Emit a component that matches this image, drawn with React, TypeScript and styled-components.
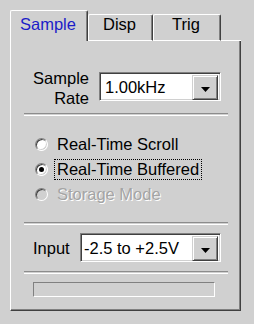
import styled, { createGlobalStyle } from 'styled-components';

const GlobalStyle = createGlobalStyle`
  html, body {
    margin: 0;
    padding: 0;
    background: #d0d0d0;
  }
  body {
    font-family: 'Liberation Sans', Arial, sans-serif;
    font-size: 16.5px;
    color: #000;
  }
`;

const Window = styled.div`
  width: 254px;
  height: 324px;
  padding: 10px 0 0 10px;
  box-sizing: border-box;
  background: #d0d0d0;
`;

const TabControl = styled.div`
  width: 231px;
  display: flex;
  flex-direction: column;
`;

const TabStrip = styled.div`
  display: flex;
  align-items: flex-end;
  height: 31px;
`;

const Tab = styled.div<{ $active?: boolean; $width: number }>`
  box-sizing: border-box;
  width: ${({ $width }) => $width}px;
  height: ${({ $active }) => ($active ? 31 : 27)}px;
  padding-top: ${({ $active }) => ($active ? 4 : 0)}px;
  padding-right: 2px;
  display: flex;
  justify-content: center;
  align-items: flex-start;
  line-height: 18px;
  border-top: 1px solid #fff;
  border-left: 1px solid #fff;
  border-right: 1px solid #404040;
  border-bottom: ${({ $active }) => ($active ? 'none' : '1px solid #fff')};
  border-radius: 2px 2px 0 0;
  box-shadow: inset -1px 0 #808080;
  color: ${({ $active }) => ($active ? '#1c1cc8' : '#000')};
`;

const TabFill = styled.div`
  flex: 1;
  border-bottom: 1px solid #fff;
`;

const Panel = styled.div`
  box-sizing: border-box;
  height: 270px;
  padding: 27px 12px 0 13px;
  border-left: 1px solid #fff;
  border-right: 1px solid #404040;
  border-bottom: 1px solid #404040;
  box-shadow: inset -1px -1px #808080;
  display: flex;
  flex-direction: column;
`;

const FieldRow = styled.div<{ $indent?: number; $align?: string; $top?: number }>`
  display: flex;
  align-items: ${({ $align }) => $align || 'center'};
  padding-left: ${({ $indent }) => $indent || 0}px;
  margin-top: ${({ $top }) => $top || 0}px;
`;

const FieldLabel = styled.div<{ $width: number; $right?: boolean }>`
  width: ${({ $width }) => $width}px;
  flex: none;
  line-height: 20px;
  text-align: ${({ $right }) => ($right ? 'right' : 'left')};
`;

const Combo = styled.div<{ $width: number; $top?: number; $gap?: number }>`
  box-sizing: border-box;
  width: ${({ $width }) => $width}px;
  height: 29px;
  margin-top: ${({ $top }) => $top || 0}px;
  margin-left: ${({ $gap }) => $gap || 0}px;
  display: flex;
  border-top: 1px solid #808080;
  border-left: 1px solid #808080;
  border-right: 1px solid #fff;
  border-bottom: 1px solid #fff;
  box-shadow: inset 1px 1px #404040, inset -1px -1px #d0d0d0;
  padding: 2px;
  background: #fff;
`;

const ComboValue = styled.div<{ $pad: number }>`
  flex: 1;
  display: flex;
  align-items: center;
  padding: 1px 0 0 ${({ $pad }) => $pad}px;
  white-space: nowrap;
`;

const ComboButton = styled.div`
  box-sizing: border-box;
  width: 26px;
  height: 25px;
  display: flex;
  align-items: center;
  justify-content: center;
  padding-top: 3px;
  background: #d0d0d0;
  border-top: 1px solid #d0d0d0;
  border-left: 1px solid #d0d0d0;
  border-right: 1px solid #404040;
  border-bottom: 1px solid #404040;
  box-shadow: inset 1px 1px #fff, inset -1px -1px #808080;
`;

const Separator = styled.div<{ $top: number }>`
  margin-top: ${({ $top }) => $top}px;
  height: 1px;
  border-top: 1px solid #8c8c8c;
  border-bottom: 1px solid #fff;
  flex: none;
`;

const RadioList = styled.div`
  margin-top: 16px;
  display: flex;
  flex-direction: column;
`;

const RadioRow = styled.div`
  height: 25px;
  display: flex;
  align-items: center;
  padding-left: 11px;
`;

const RadioDot = styled.span<{ $checked?: boolean; $disabled?: boolean }>`
  box-sizing: border-box;
  width: 13px;
  height: 13px;
  flex: none;
  border-radius: 50%;
  border: 1px solid;
  border-color: #808080 #fff #fff #808080;
  box-shadow: inset 1px 1px #404040, inset -1px -1px #d0d0d0;
  background: ${({ $disabled }) => ($disabled ? '#d0d0d0' : '#fff')};
  display: flex;
  align-items: center;
  justify-content: center;
  margin-right: 6px;

  &::after {
    content: '';
    width: 5px;
    height: 5px;
    border-radius: 50%;
    background: ${({ $checked }) => ($checked ? '#000' : 'transparent')};
  }
`;

const RadioText = styled.span<{ $focused?: boolean; $disabled?: boolean }>`
  line-height: 19px;
  padding: 0 2px;
  border: 1px dotted ${({ $focused }) => ($focused ? '#000' : 'transparent')};
  color: ${({ $disabled }) => ($disabled ? '#a4a4a4' : '#000')};
  text-shadow: ${({ $disabled }) => ($disabled ? '1px 1px #fff' : 'none')};
  white-space: nowrap;
`;

const ProgressTrack = styled.div`
  margin: 8px 0 0 9px;
  width: 182px;
  height: 15px;
  box-sizing: border-box;
  border-top: 1px solid #808080;
  border-left: 1px solid #808080;
  border-right: 1px solid #fff;
  border-bottom: 1px solid #fff;
`;

const Arrow = () => (
  <svg width="9" height="5" viewBox="0 0 9 5">
    <polygon points="0,0 9,0 4.5,5" fill="#000" />
  </svg>
);

const DropDown = ({
  value,
  width,
  top,
  gap,
  pad = 2,
}: {
  value: string;
  width: number;
  top?: number;
  gap?: number;
  pad?: number;
}) => (
  <Combo $width={width} $top={top} $gap={gap}>
    <ComboValue $pad={pad}>{value}</ComboValue>
    <ComboButton>
      <Arrow />
    </ComboButton>
  </Combo>
);

const modes = [
  { label: 'Real-Time Scroll' },
  { label: 'Real-Time Buffered', checked: true, focused: true },
  { label: 'Storage Mode', disabled: true },
];

export default function App() {
  return (
    <>
      <GlobalStyle />
      <Window>
        <TabControl>
          <TabStrip>
            <Tab $active $width={78}>Sample</Tab>
            <Tab $width={65}>Disp</Tab>
            <Tab $width={68}>Trig</Tab>
            <TabFill />
          </TabStrip>
          <Panel>
            <FieldRow $align="flex-start">
              <FieldLabel $width={65} $right>
                Sample
                <br />
                Rate
              </FieldLabel>
              <DropDown value="1.00kHz" width={122} top={4} gap={10} pad={3} />
            </FieldRow>
            <Separator $top={5} />
            <RadioList>
              {modes.map((m, i) => (
                <RadioRow key={i}>
                  <RadioDot $checked={m.checked} $disabled={m.disabled} />
                  <RadioText $focused={m.focused} $disabled={m.disabled}>
                    {m.label}
                  </RadioText>
                </RadioRow>
              ))}
            </RadioList>
            <Separator $top={15} />
            <FieldRow $indent={9} $top={8}>
              <FieldLabel $width={47}>Input</FieldLabel>
              <DropDown value="-2.5 to +2.5V" width={141} pad={1} />
            </FieldRow>
            <Separator $top={9} />
            <ProgressTrack />
          </Panel>
        </TabControl>
      </Window>
    </>
  );
}
